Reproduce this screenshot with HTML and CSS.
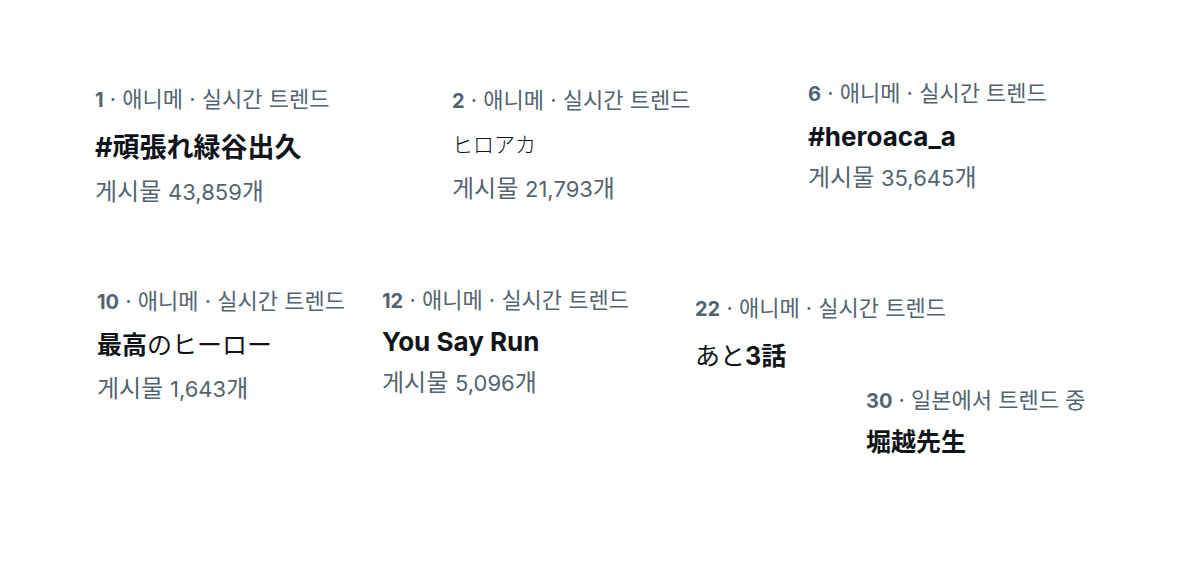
FILE: index.html
```html
<!DOCTYPE html>
<html lang="ko">
<head>
  <meta charset="UTF-8">
  <meta name="viewport" content="width=device-width, initial-scale=1.0">
  <title>실시간 트렌드</title>
  <link rel="stylesheet" href="styles.css">
</head>
<body>
  <main class="board">
    <div class="row row-top">
      <article class="trend trend-1">
        <p class="trend-meta"><b>1</b> · 애니메 · 실시간 트렌드</p>
        <h2 class="trend-title">#頑張れ緑谷出久</h2>
        <p class="trend-count">게시물 <span class="num">43,859</span>개</p>
      </article>
      <article class="trend trend-2">
        <p class="trend-meta"><b>2</b> · 애니메 · 실시간 트렌드</p>
        <h2 class="trend-title"><span class="light kana">ヒロアカ</span></h2>
        <p class="trend-count">게시물 <span class="num">21,793</span>개</p>
      </article>
      <article class="trend trend-6 compact">
        <p class="trend-meta"><b>6</b> · 애니메 · 실시간 트렌드</p>
        <h2 class="trend-title">#heroaca_a</h2>
        <p class="trend-count">게시물 <span class="num">35,645</span>개</p>
      </article>
    </div>

    <div class="row row-bottom">
      <article class="trend trend-10">
        <p class="trend-meta"><b>10</b> · 애니메 · 실시간 트렌드</p>
        <h2 class="trend-title">最高<span class="light">のヒーロー</span></h2>
        <p class="trend-count">게시물 <span class="num">1,643</span>개</p>
      </article>
      <article class="trend trend-12 compact">
        <p class="trend-meta"><b>12</b> · 애니메 · 실시간 트렌드</p>
        <h2 class="trend-title">You Say Run</h2>
        <p class="trend-count">게시물 <span class="num">5,096</span>개</p>
      </article>
      <div class="stack">
        <article class="trend trend-22">
          <p class="trend-meta"><b>22</b> · 애니메 · 실시간 트렌드</p>
          <h2 class="trend-title"><span class="light">あと</span>3話</h2>
        </article>
        <article class="trend trend-30 compact">
          <p class="trend-meta"><b>30</b> · 일본에서 트렌드 중</p>
          <h2 class="trend-title">堀越先生</h2>
        </article>
      </div>
    </div>
  </main>
</body>
</html>
```

FILE: styles.css
```css
* {
  margin: 0;
  padding: 0;
  box-sizing: border-box;
}

body {
  background: #ffffff;
  font-family: Inter, "Noto Sans CJK KR", "Noto Sans CJK JP", sans-serif;
  color: #0f1419;
}

/* Canvas */
.board {
  width: 1200px;
  height: 567px;
  overflow: hidden;
}

.row {
  display: flex;
  align-items: flex-start;
}

.row-top {
  padding: 87px 0 0 95px;
}

.row-bottom {
  margin-top: 82px;
  padding-left: 97px;
}

/* Trend card */
.trend-meta {
  font-size: 22px;
  line-height: 24px;
  color: #536471;
  margin-bottom: 18px;
  white-space: nowrap;
}

.trend-meta b {
  font-size: 20px;
  font-weight: 700;
}

.trend-title {
  font-size: 26px;
  line-height: 32px;
  font-weight: 700;
  font-family: Inter, "Noto Sans CJK JP", sans-serif;
  white-space: nowrap;
}

.trend-title .light {
  font-weight: 400;
}

.trend-title .kana {
  font-size: 21px;
  font-weight: 300;
}

.trend-count {
  font-size: 24px;
  line-height: 28px;
  color: #536471;
  margin-top: 14px;
  white-space: nowrap;
}

.trend-count .num {
  font-size: 22px;
}

.compact .trend-meta {
  margin-bottom: 15px;
}

.compact .trend-count {
  margin-top: 11px;
}

/* Placement */
.trend-1 { width: 357px; }
.trend-1 .trend-meta { margin-bottom: 20px; }
.trend-1 .trend-title { font-size: 27px; }

.trend-2 { width: 356px; margin-top: 1px; }
.trend-2 .trend-meta { margin-bottom: 14px; }

.trend-6 { margin-top: -6px; }

.trend-10 { width: 285px; margin-top: 1px; }
.trend-10 .trend-meta { margin-bottom: 15px; }
.trend-10 .trend-title { font-size: 25px; }

.trend-12 { width: 313px; }
.trend-12 .trend-meta { margin-bottom: 13px; }

.stack {
  margin-top: 8px;
}

.trend-22 .trend-title,
.trend-30 .trend-title { font-size: 25px; }
.trend-22 .trend-meta { margin-bottom: 19px; }

.trend-30 {
  margin: 16px 0 0 171px;
}

.trend-30 .trend-meta { margin-bottom: 13px; }
```
